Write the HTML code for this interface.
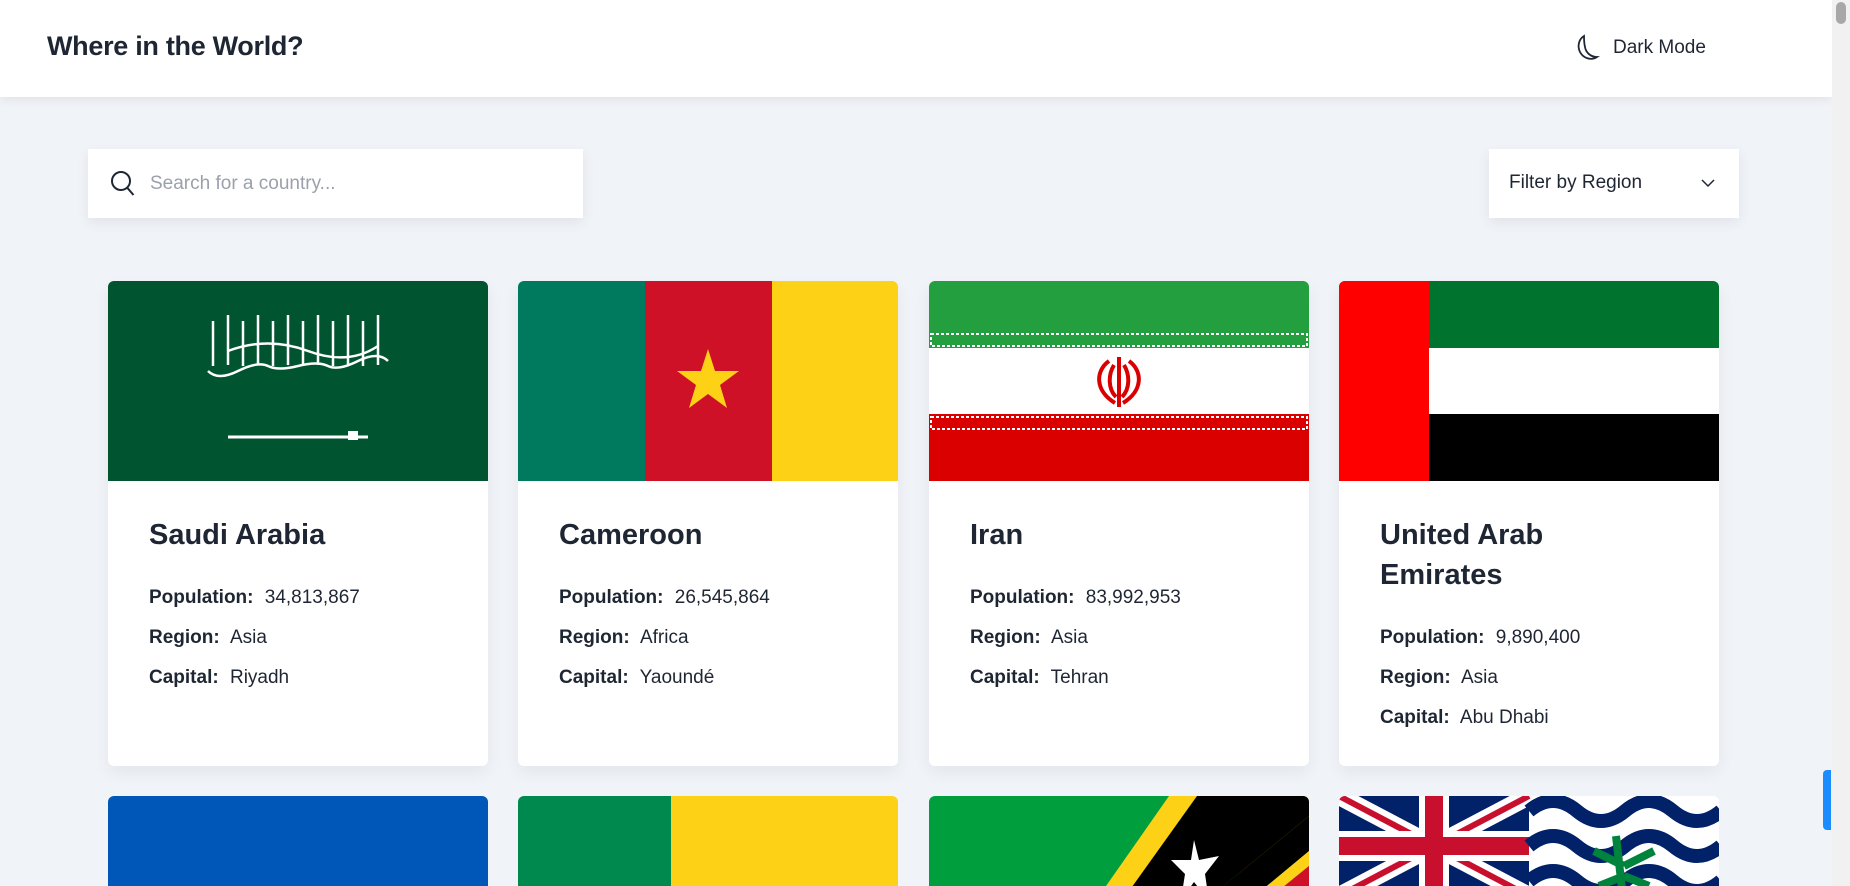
<!DOCTYPE html>
<html><head><meta charset="utf-8"><style>
*{margin:0;padding:0;box-sizing:border-box}
html{width:1850px;height:886px;overflow:hidden}
body{width:1850px;height:886px;overflow:hidden;background:#f0f3f8;font-family:"Liberation Sans",sans-serif;color:#1f2633;position:relative}
.hdr{position:absolute;left:0;top:0;width:1832px;height:97px;background:#fff;box-shadow:0 2px 10px rgba(0,0,0,.08)}
.hdr h1{position:absolute;left:47px;top:31px;font-size:27px;font-weight:bold;letter-spacing:-.3px}
.dm{position:absolute;left:1575px;top:34px;font-size:19px;display:flex;align-items:center;gap:12px}
.sb{position:absolute;right:0;top:0;width:18px;height:886px;background:#f1f1f1}
.sb i{position:absolute;left:4px;top:2px;width:10px;height:22px;background:#a8a8a8;border-radius:5px}
.blue{position:absolute;left:1823px;top:770px;width:8px;height:60px;background:#1a8cff;border-radius:4px 0 0 4px}
.search{position:absolute;left:88px;top:149px;width:495px;height:69px;background:#fff;box-shadow:0 4px 12px rgba(0,0,0,.07);display:flex;align-items:center;padding-left:22px;font-size:19px;color:#9ba0ab}
.search svg{margin-right:14px}
.filter{position:absolute;left:1489px;top:149px;width:250px;height:69px;background:#fff;box-shadow:0 4px 12px rgba(0,0,0,.07);font-size:19px;color:#1f2633;padding:23px 0 0 20px}
.filter svg{position:absolute;right:24px;top:30px}
.card{position:absolute;width:380px;height:485px;background:#fff;border-radius:6px;overflow:hidden;box-shadow:0 6px 16px rgba(0,0,0,.06)}
.card.r2{height:90px;border-radius:6px 6px 0 0;box-shadow:none}
.card .f{height:200px;display:block}
.card .b{padding:34px 41px 0}
.card h2{font-size:29px;font-weight:bold;line-height:40px;margin-bottom:23px}
.card p{font-size:19px;line-height:40px}
.card p b{margin-right:6px}
</style></head><body>
<div class="hdr"><h1>Where in the World?</h1>
<div class="dm"><svg width="26" height="28" viewBox="0 0 26 28"><path d="M9 2C4 5 2 12 5 18s11 9 17 5c-6 0-11-4-12-10C9 9 9 5 9 2z" fill="none" stroke="#1f2633" stroke-width="1.8"/></svg><span>Dark Mode</span></div></div>
<div class="sb"><i></i></div>
<div class="blue"></div>
<div class="search"><svg width="26" height="28" viewBox="0 0 26 28"><circle cx="11" cy="11" r="9" fill="none" stroke="#1f2633" stroke-width="2"/><path d="M17.5 18l6 7" stroke="#1f2633" stroke-width="2"/></svg>Search for a country...</div>
<div class="filter">Filter by Region<svg width="14" height="9" viewBox="0 0 14 9"><path d="M1 1l6 6 6-6" fill="none" stroke="#1f2633" stroke-width="1.5"/></svg></div>

<div class="card" style="left:108px;top:281px"><svg class="f" width="380" height="200"><rect width="380" height="200" fill="#005430"/><g fill="none" stroke="#fff" stroke-width="2.5"><path d="M100 90q10 10 30 0t30-5 30 0 30 0 30-5 30 0M105 40v45M120 34v50M135 40v45M150 34v50M165 40v45M180 34v50M195 40v45M210 34v50M225 40v45M240 34v50M255 40v45M270 34v50M120 70q40-15 80 0t70-5"/></g><path d="M120 156h140" stroke="#fff" stroke-width="3"/><rect x="240" y="150" width="10" height="9" fill="#fff"/></svg>
<div class="b"><h2>Saudi Arabia</h2><p><b>Population:</b> 34,813,867</p><p><b>Region:</b> Asia</p><p><b>Capital:</b> Riyadh</p></div></div>

<div class="card" style="left:518px;top:281px"><svg class="f" width="380" height="200"><rect width="127" height="200" fill="#007a5e"/><rect x="127" width="127" height="200" fill="#ce1126"/><rect x="254" width="126" height="200" fill="#fcd116"/><polygon points="190,68 197,90 221,90 202,104 209,127 190,113 171,127 178,104 159,90 183,90" fill="#fcd116"/></svg>
<div class="b"><h2>Cameroon</h2><p><b>Population:</b> 26,545,864</p><p><b>Region:</b> Africa</p><p><b>Capital:</b> Yaoundé</p></div></div>

<div class="card" style="left:929px;top:281px"><svg class="f" width="380" height="200"><rect width="380" height="67" fill="#239f40"/><rect y="67" width="380" height="66" fill="#fff"/><rect y="133" width="380" height="67" fill="#da0000"/><rect x="2" y="53" width="376" height="12" fill="none" stroke="#fff" stroke-width="2" stroke-dasharray="3 2"/><rect x="2" y="136" width="376" height="12" fill="none" stroke="#fff" stroke-width="2" stroke-dasharray="3 2"/><g fill="none" stroke="#da0000" stroke-width="4"><path d="M180 80c-14 10-14 30 6 42M200 80c14 10 14 30-6 42M185 84c-6 10-6 24 2 32M195 84c6 10 6 24-2 32"/><path d="M190 76v50"/></g></svg>
<div class="b"><h2>Iran</h2><p><b>Population:</b> 83,992,953</p><p><b>Region:</b> Asia</p><p><b>Capital:</b> Tehran</p></div></div>

<div class="card" style="left:1339px;top:281px"><svg class="f" width="380" height="200"><rect width="380" height="67" fill="#00732f"/><rect y="67" width="380" height="66" fill="#fff"/><rect y="133" width="380" height="67" fill="#000"/><rect width="90" height="200" fill="#f00"/></svg>
<div class="b"><h2>United Arab<br>Emirates</h2><p><b>Population:</b> 9,890,400</p><p><b>Region:</b> Asia</p><p><b>Capital:</b> Abu Dhabi</p></div></div>

<div class="card r2" style="left:108px;top:796px"><svg class="f" width="380" height="200"><rect width="380" height="200" fill="#0057b8"/></svg></div>
<div class="card r2" style="left:518px;top:796px"><svg class="f" width="380" height="200"><rect width="153" height="200" fill="#00894e"/><rect x="153" width="227" height="200" fill="#fcd116"/></svg></div>
<div class="card r2" style="left:929px;top:796px"><svg class="f" width="380" height="200"><rect width="380" height="200" fill="#009e3d"/><polygon points="240,0 380,0 380,30 130,200 100,200" fill="#fcd116"/><polygon points="268,0 380,0 380,20 160,200 125,200" fill="#000"/><polygon points="380,20 380,55 205,200 160,200" fill="#000"/><polygon points="380,55 380,70 220,200 205,200" fill="#fcd116"/><polygon points="380,70 380,200 220,200" fill="#ce1127"/><polygon points="265,44 270,64 290,60 276,78 280,105 265,86 252,104 256,78 242,64 262,64" fill="#fff"/></svg></div>
<div class="card r2" style="left:1339px;top:796px"><svg class="f" width="380" height="200"><rect width="380" height="200" fill="#fff"/><rect width="190" height="100" fill="#012169"/><path d="M0 0L190 100M190 0L0 100" stroke="#fff" stroke-width="18"/><path d="M0 0L190 100M190 0L0 100" stroke="#c8102e" stroke-width="6"/><path d="M95 0v100M0 50h190" stroke="#fff" stroke-width="30"/><path d="M95 0v100M0 50h190" stroke="#c8102e" stroke-width="18"/><path d="M190 15q24-20 48 0t48 0 48 0 48 0M190 50q24-20 48 0t48 0 48 0 48 0M190 85q24-20 48 0t48 0 48 0 48 0" stroke="#012169" stroke-width="14" fill="none"/><path d="M285 110l-8-70M285 70l-30-15M285 70l30-15M285 80l-25 10M285 80l25 10" stroke="#00843d" stroke-width="8"/></svg></div>
</body></html>
